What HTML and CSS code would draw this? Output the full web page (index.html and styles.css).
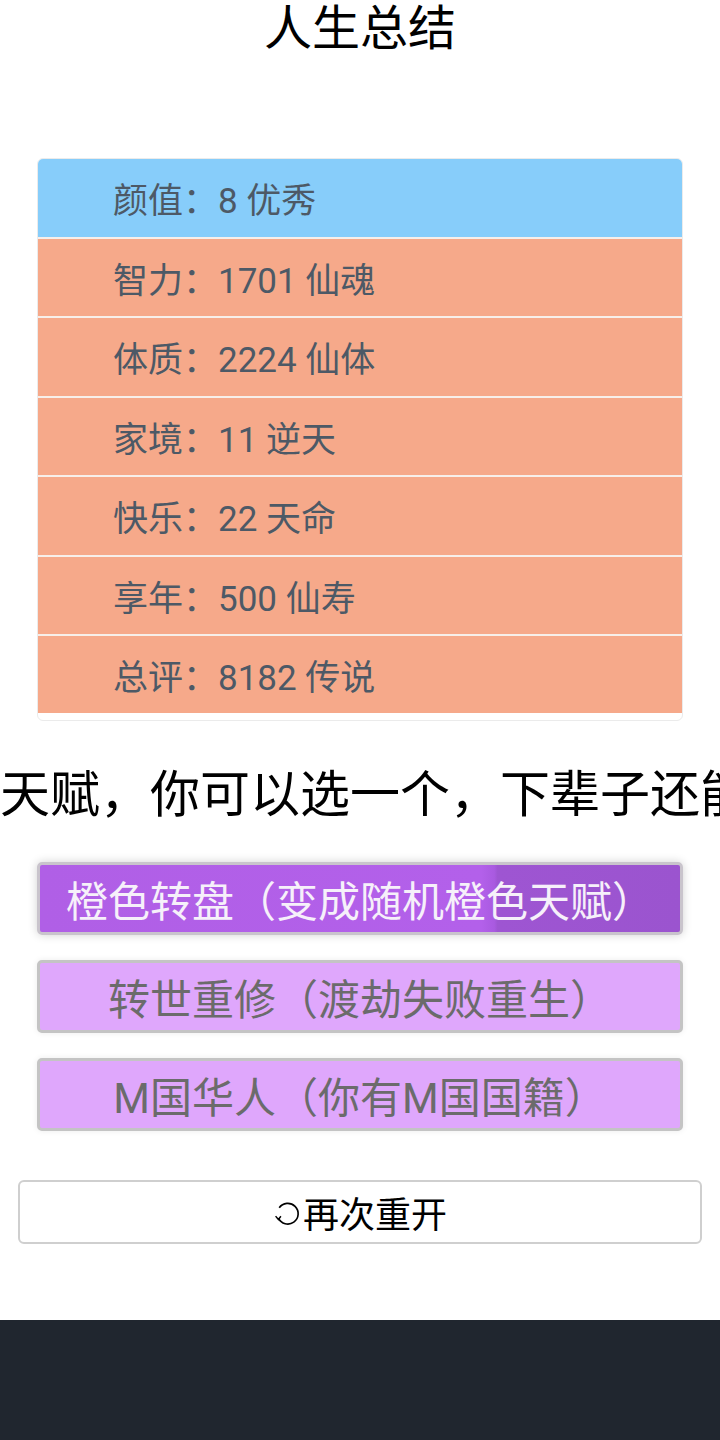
FILE: index.html
```html
<!DOCTYPE html>
<html lang="zh-CN">
<head>
<meta charset="utf-8">
<title>人生总结</title>
<link rel="stylesheet" href="styles.css">
</head>
<body>
<div class="page">
  <h1 class="title">人生总结</h1>
  <ul class="summary">
    <li class="row row-blue">颜值：8 优秀</li>
    <li class="row row-orange">智力：1701 仙魂</li>
    <li class="row row-orange">体质：2224 仙体</li>
    <li class="row row-orange">家境：11 逆天</li>
    <li class="row row-orange">快乐：22 天命</li>
    <li class="row row-orange">享年：500 仙寿</li>
    <li class="row row-orange">总评：8182 传说</li>
  </ul>
  <div class="hint">天赋，你可以选一个，下辈子还能</div>
  <div class="choices">
    <button class="choice choice-selected">橙色转盘（变成随机橙色天赋）</button>
    <button class="choice">转世重修（渡劫失败重生）</button>
    <button class="choice">M国华人（你有M国国籍）</button>
  </div>
  <button class="restart">
    <svg class="restart-icon" viewBox="0 0 26 26" width="27" height="27" aria-hidden="true">
      <path d="M5.2 17.5 A10 10 0 1 0 6 7.5" fill="none" stroke="#000" stroke-width="1.6"/>
      <path d="M2.5 15.5 L5.2 18.8 L7.6 15.6" fill="none" stroke="#000" stroke-width="1.4"/>
    </svg>
    <span>再次重开</span>
  </button>
  <footer class="footer"></footer>
</div>
</body>
</html>
```

FILE: styles.css
```css
html, body {
  margin: 0;
  padding: 0;
  background: #fff;
}

body {
  font-family: Roboto, "Noto Sans CJK SC", sans-serif;
  color: #000;
}

.page {
  display: flex;
  flex-direction: column;
  width: 720px;
  overflow: hidden;
}

.title {
  margin: 0;
  font-size: 48px;
  line-height: 58px;
  font-weight: normal;
  text-align: center;
  color: #000;
}

.summary {
  list-style: none;
  margin: 100px 37px 0;
  padding: 0 0 7px;
  border: 1px solid #ebebeb;
  border-radius: 6px;
  overflow: hidden;
  background: #fff;
}

.row {
  display: flex;
  align-items: center;
  height: 77.5px;
  padding-left: 75px;
  font-size: 35px;
  color: #4d5966;
  border-bottom: 2px solid #f7efea;
}

.row:last-child {
  border-bottom: 0;
  height: 77px;
}

.row-blue {
  background: #87cdfa;
}

.row-orange {
  background: #f6a98a;
}

.hint {
  margin-top: 44px;
  padding-left: 0;
  font-size: 50px;
  line-height: 60px;
  white-space: nowrap;
  overflow: hidden;
  color: #000;
}

.choices {
  display: flex;
  flex-direction: column;
  gap: 25px;
  margin: 37px 37px 0;
}

.choice {
  display: block;
  height: 73px;
  padding: 0;
  border: 3px solid #c4c4c4;
  border-radius: 5px;
  background: #dfa7fc;
  color: #6b6b6b;
  font-family: Roboto, "Noto Sans CJK SC", sans-serif;
  font-size: 42px;
  text-align: center;
  white-space: nowrap;
  box-shadow: 0 0 6px rgba(0, 0, 0, 0.08);
}

.choice-selected {
  background: linear-gradient(to right, #b05fe6 0, #b360ea 69%, #a95ae0 71%, #9e55d2 71.5%, #9b54cf 100%);
  color: #f6f0fa;
  border-color: #c9c4cc;
  box-shadow: 0 0 10px rgba(0, 0, 0, 0.18);
}

.restart {
  display: flex;
  align-items: center;
  justify-content: center;
  gap: 3px;
  height: 64px;
  margin: 49px 18px 0;
  border: 2px solid #cfcfcf;
  border-radius: 6px;
  background: #fff;
  color: #000;
  font-family: Roboto, "Noto Sans CJK SC", sans-serif;
  font-size: 36px;
  padding: 0;
}

.restart-icon {
  display: block;
  margin-top: 2px;
}

.footer {
  margin-top: 76px;
  height: 120px;
  background: #20262f;
}
```
